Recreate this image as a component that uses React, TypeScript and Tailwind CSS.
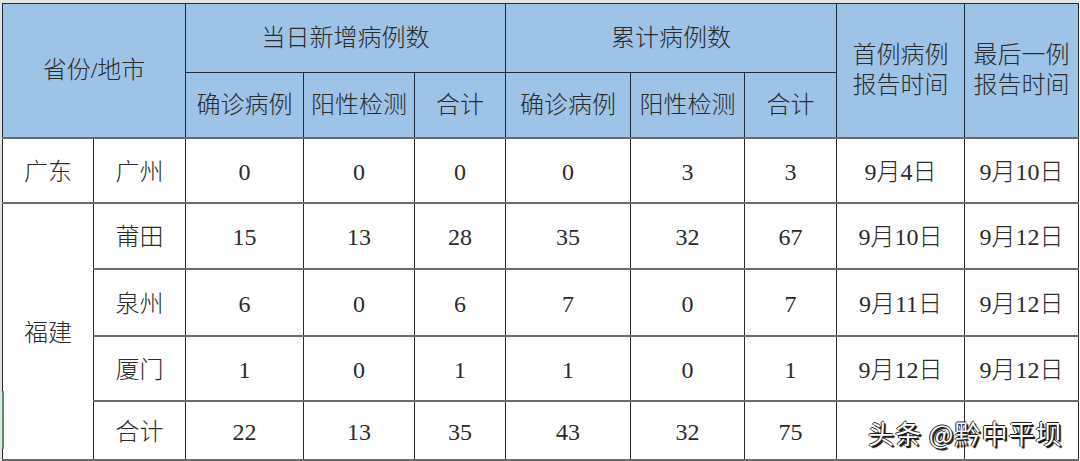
const body = [
  { city: "广州", v: ["0", "0", "0", "0", "3", "3"], first: "9月4日", last: "9月10日" },
];

const fujian = [
  { city: "莆田", v: ["15", "13", "28", "35", "32", "67"], first: "9月10日", last: "9月12日", h: "h-[66px]" },
  { city: "泉州", v: ["6", "0", "6", "7", "0", "7"], first: "9月11日", last: "9月12日", h: "h-[67px]" },
  { city: "厦门", v: ["1", "0", "1", "1", "0", "1"], first: "9月12日", last: "9月12日", h: "h-[65px]" },
  { city: "合计", v: ["22", "13", "35", "43", "32", "75"], first: "", last: "", h: "h-[59px]" },
];

const widths = [91, 92, 118, 111, 91, 125, 114, 92, 128, 114];

const hd = "border border-[#1d2d3d] bg-[#9dc3e6] text-center align-middle font-light";
const td = "border-x border-x-[#2a2a2a] border-y-2 border-y-[#6a6a6a] text-center align-middle pt-[3px]";

export default function App() {
  return (
    <div
      className="relative w-[1080px] h-[461px] overflow-hidden bg-white border-t-[3px] border-t-[#e4e4e4] border-l-2 border-l-[#e2e2e2] text-[24px] font-light text-[#2b2b2b]"
      style={{ fontFamily: '"Liberation Serif", "Noto Sans CJK SC", serif' }}
    >
      <table className="table-fixed border-collapse w-[1077px]">
        <colgroup>
          {widths.map((w, i) => (
            <col key={i} style={{ width: w }} />
          ))}
        </colgroup>
        <thead>
          <tr className="h-[69px]">
            <th rowSpan={2} colSpan={2} className={hd}>
              省份/地市
            </th>
            <th colSpan={3} className={hd}>
              当日新增病例数
            </th>
            <th colSpan={3} className={hd}>
              累计病例数
            </th>
            <th rowSpan={2} className={`${hd} leading-[30px]`}>
              首例病例
              <br />
              报告时间
            </th>
            <th rowSpan={2} className={`${hd} leading-[30px]`}>
              最后一例
              <br />
              报告时间
            </th>
          </tr>
          <tr className="h-[65px]">
            <th className={hd}>确诊病例</th>
            <th className={hd}>阳性检测</th>
            <th className={hd}>合计</th>
            <th className={hd}>确诊病例</th>
            <th className={hd}>阳性检测</th>
            <th className={hd}>合计</th>
          </tr>
        </thead>
        <tbody>
          {body.map((r) => (
            <tr key={r.city} className="h-[65px]">
              <td className={td}>广东</td>
              <td className={td}>{r.city}</td>
              {r.v.map((x, i) => (
                <td key={i} className={td}>
                  {x}
                </td>
              ))}
              <td className={td}>{r.first}</td>
              <td className={td}>{r.last}</td>
            </tr>
          ))}
          {fujian.map((r, idx) => (
            <tr key={r.city} className={r.h}>
              {idx === 0 && (
                <td rowSpan={4} className={td}>
                  福建
                </td>
              )}
              <td className={td}>{r.city}</td>
              {r.v.map((x, i) => (
                <td key={i} className={td}>
                  {x}
                </td>
              ))}
              <td className={td}>{r.first}</td>
              <td className={td}>{r.last}</td>
            </tr>
          ))}
        </tbody>
      </table>
      <div className="absolute bottom-[12px] left-[0px] h-[58px] w-[2px] bg-[#4a9a6a]" />
      <div
        className="absolute left-[866px] top-[410px] text-[26px] tracking-[1px] font-normal text-white whitespace-nowrap"
        style={{
          fontFamily: '"Noto Sans CJK SC", "Noto Sans", sans-serif',
          textShadow: "1px 1px 0 #222, -1px 0 0 #222, 0 -1px 0 #222, 2px 2px 1px #000",
        }}
      >
        头条 @黔中平坝
      </div>
    </div>
  );
}
